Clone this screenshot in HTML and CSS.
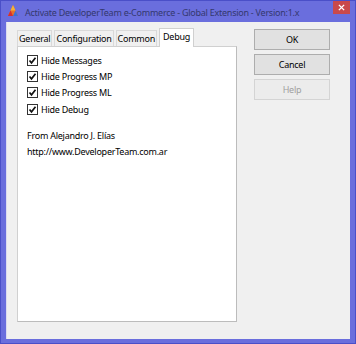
FILE: index.html
```html
<!DOCTYPE html>
<html>
<head>
<meta charset="utf-8">
<link rel="stylesheet" href="styles.css">
</head>
<body>
<div class="window">
  <div class="titlebar">
    <svg class="appicon" width="12" height="12" viewBox="0 0 12 12">
      <polygon points="6,0 11,11 1,11" fill="#e8702a"/>
      <polygon points="6,0 8.5,5.5 3.5,5.5" fill="#f3b23a"/>
      <polygon points="1,11 3.5,5.5 6,11" fill="#d62d2d"/>
      <polygon points="6,11 8.5,5.5 11,11" fill="#3a6fd8"/>
    </svg>
    <span class="title">Activate DeveloperTeam e-Commerce - Global Extension - Version:1.x</span>
    <div class="close">
      <svg width="7" height="7" viewBox="0 0 8 8"><path d="M1 1 L7 7 M7 1 L1 7" stroke="#fff" stroke-width="1.6"/></svg>
    </div>
  </div>
  <div class="client">
    <div class="tabarea">
      <div class="tabs">
        <div class="tab">General</div>
        <div class="tab">Configuration</div>
        <div class="tab">Common</div>
        <div class="tab active">Debug</div>
      </div>
      <div class="panel">
        <label class="check"><span class="box"><svg width="9" height="9" viewBox="0 0 9 9"><path d="M1.5 4.5 L3.5 6.8 L7.5 1.8" fill="none" stroke="#111" stroke-width="1.7"/></svg></span>Hide Messages</label>
        <label class="check"><span class="box"><svg width="9" height="9" viewBox="0 0 9 9"><path d="M1.5 4.5 L3.5 6.8 L7.5 1.8" fill="none" stroke="#111" stroke-width="1.7"/></svg></span>Hide Progress MP</label>
        <label class="check"><span class="box"><svg width="9" height="9" viewBox="0 0 9 9"><path d="M1.5 4.5 L3.5 6.8 L7.5 1.8" fill="none" stroke="#111" stroke-width="1.7"/></svg></span>Hide Progress ML</label>
        <label class="check"><span class="box"><svg width="9" height="9" viewBox="0 0 9 9"><path d="M1.5 4.5 L3.5 6.8 L7.5 1.8" fill="none" stroke="#111" stroke-width="1.7"/></svg></span>Hide Debug</label>
        <div class="info">
          <div>From Alejandro J. Elías</div>
          <div>http://www.DeveloperTeam.com.ar</div>
        </div>
      </div>
    </div>
    <div class="buttons">
      <div class="btn">OK</div>
      <div class="btn">Cancel</div>
      <div class="btn disabled">Help</div>
    </div>
  </div>
</div>
</body>
</html>
```
FILE: styles.css
```css
html, body {
  margin: 0;
  padding: 0;
  background: #fff;
}
.window {
  width: 356px;
  height: 344px;
  box-sizing: border-box;
  background: #6a6edd;
  border: 1px solid #4a4fc8;
  display: flex;
  flex-direction: column;
  font-family: "Noto Sans", sans-serif;
  font-size: 9px;
  letter-spacing: -0.25px;
  color: #000;
}
.titlebar {
  height: 21px;
  display: flex;
  align-items: flex-start;
  padding-left: 6px;
}
.appicon {
  margin-top: 4px;
  margin-right: 6px;
}
.title {
  margin-top: 5px;
  color: #34386e;
  white-space: nowrap;
  flex: 1;
}
.close {
  width: 17px;
  height: 13px;
  background: #c9494b;
  display: flex;
  align-items: center;
  justify-content: center;
  margin-right: 5px;
}
.client {
  flex: 1;
  margin: 0 5px 4px 5px;
  background: #f0f0f0;
  border-left: 1px solid #dcdcf0;
  display: flex;
  padding: 6px 0 0 10px;
}
.tabarea {
  width: 220px;
  display: flex;
  flex-direction: column;
  height: 294px;
}
.tabs {
  display: flex;
  align-items: flex-end;
  height: 18px;
  gap: 2px;
}
.tab {
  height: 15px;
  padding: 0 1px;
  border: 1px solid #d9d9d9;
  border-bottom: none;
  background: #f0f0f0;
  line-height: 15px;
}
.tab.active {
  height: 18px;
  background: #fff;
  padding: 0 3px;
  margin-bottom: -1px;
  position: relative;
  z-index: 1;
  border-color: #d0d0d0;
}
.panel {
  flex: 1;
  background: #fff;
  border: 1px solid #d0d0d0;
  border-right-color: #bcbcbc;
  border-bottom-color: #bcbcbc;
  padding: 5px 0 0 9px;
  display: flex;
  flex-direction: column;
}
.check {
  display: flex;
  align-items: center;
  height: 16.3px;
}
.box {
  width: 9px;
  height: 9px;
  border: 1px solid #333;
  background: #fff;
  margin-right: 3px;
  display: flex;
}
.info {
  margin-top: 11px;
  line-height: 16px;
}
.buttons {
  margin-left: 17px;
  display: flex;
  flex-direction: column;
  gap: 4px;
  padding-top: 1px;
}
.btn {
  width: 74px;
  height: 19px;
  border: 1px solid #adadad;
  background: #e1e1e1;
  display: flex;
  align-items: center;
  justify-content: center;
}
.btn.disabled {
  color: #a0a0a0;
  border-color: #d4d4d4;
  background: #ececec;
}
```
